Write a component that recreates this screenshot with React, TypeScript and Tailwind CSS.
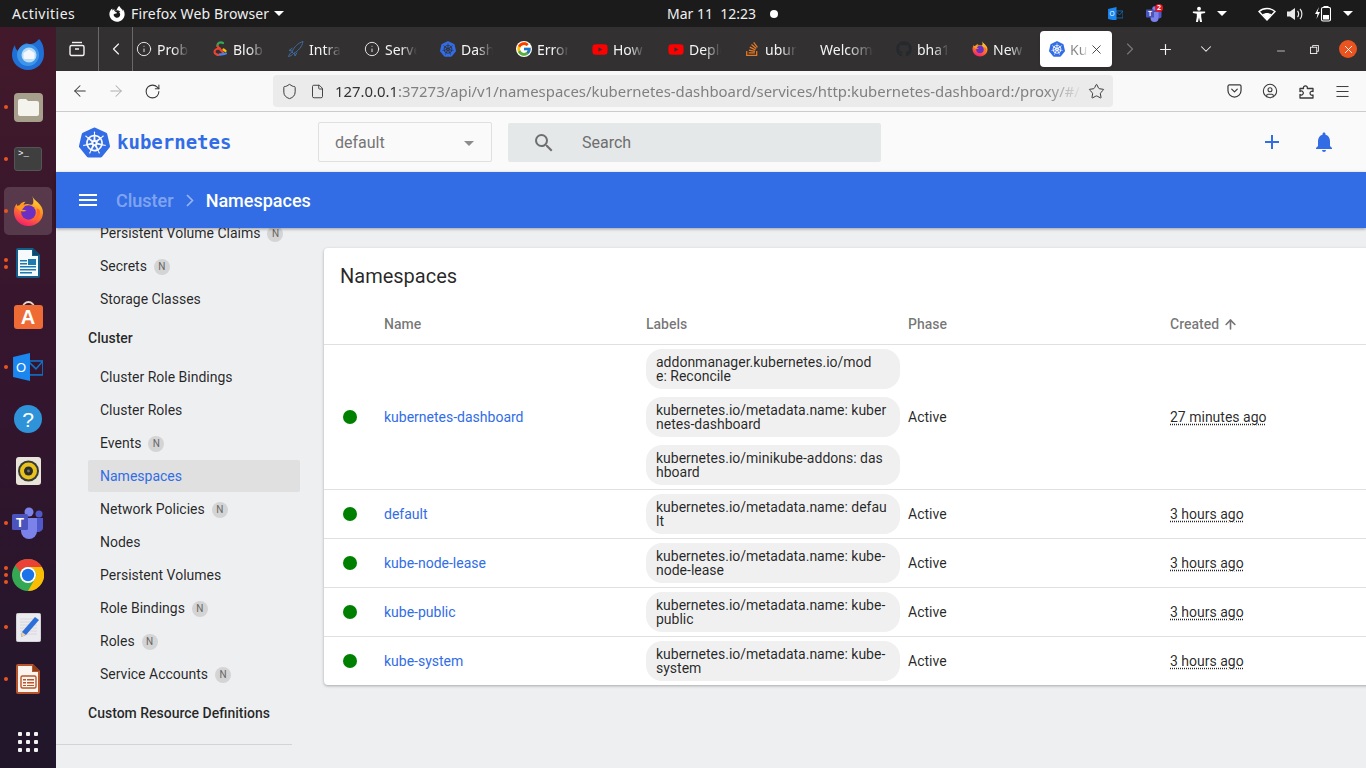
import { ArrowLeft, ArrowRight, ArrowUp, RotateCw, Shield, File, Star, CircleUser, Menu, ChevronLeft, ChevronRight, ChevronDown, Plus, X, Info, Minus } from "lucide-react";
import { FaFirefoxBrowser, FaGithub, FaStackOverflow, FaYoutube } from "react-icons/fa";
import { FcGoogle } from "react-icons/fc";
import { SiKubernetes } from "react-icons/si";
import { MdAdd, MdArrowDropDown, MdMenu, MdNotifications, MdSearch } from "react-icons/md";
import type { ReactNode } from "react";

function FirefoxIcon({ size }: { size: number }) {
    return (
        <svg width={size} height={size} viewBox="0 0 32 32">
            <defs>
                <linearGradient id="ffa" x1="0.7" y1="0" x2="0.3" y2="1">
                    <stop offset="0" stopColor="#ffe03a" />
                    <stop offset="0.45" stopColor="#ff8a1f" />
                    <stop offset="1" stopColor="#f5196e" />
                </linearGradient>
            </defs>
            <path d="M20 0c1 3 3 4 6 7 3 3 5 6 5 10 0 8-7 14-15 14S1 25 1 16c0-3 1-6 3-8 0 2 1 3 2 3 1-3 4-5 7-5-1 1-2 2-2 3 2-1 5-1 7 0 3 1 4-3 2-9z" fill="url(#ffa)" />
            <circle cx="16" cy="17" r="7.5" fill="#6b2fc4" />
            <path d="M3 11c3-2 6-2 9 0l-3 3 5 1c-3 2-7 1-11-4z" fill="#ff9a1f" />
            <path d="M24 13c2 5 0 11-6 12 5 1 10-3 10-8 0-2-1-4-4-4z" fill="#ff6a2a" />
        </svg>
    );
}

function ChromeIcon() {
    return (
        <svg width="32" height="32" viewBox="0 0 32 32">
            <circle cx="16" cy="16" r="16" fill="#34a853" />
            <path d="M16 0a16 16 0 0 1 13.900 8H16a8 8 0 0 0-7.500 5.200L3.200 6.200A16 16 0 0 1 16 0z" fill="#ea4335" />
            <path d="M29.900 8A16 16 0 0 1 16 32l6.600-11.500A8 8 0 0 0 22 10.500z M29.900 8H16l6 2.500z" fill="#fbbc04" />
            <circle cx="16" cy="16" r="8" fill="#fff" />
            <circle cx="16" cy="16" r="6.200" fill="#1a73e8" />
        </svg>
    );
}

function ThunderbirdIcon() {
    return (
        <svg width="32" height="32" viewBox="0 0 32 32">
            <path d="M27 0c4 4 5 9 5 15 0 9-7 16-16 16S0 24 0 16C0 12 1 9 3 6c0 3 1 4 3 6 2-5 6-8 11-8-1 0-2 1-2 2 5-1 9-2 12-6z" fill="#1f6fd6" />
            <circle cx="16" cy="16" r="11" fill="#3f96e8" />
            <circle cx="17" cy="16" r="7.500" fill="#b9dcf8" />
            <path d="M11.500 14l5.500-3.500 5.500 3.500v4.500a1.500 1.500 0 0 1-1.500 1.500h-8a1.500 1.500 0 0 1-1.500-1.500z" fill="#f4f8fd" />
        </svg>
    );
}

function FilesIcon() {
    return (
        <svg width="29" height="29" viewBox="0 0 29 29">
            <rect width="29" height="29" rx="4" fill="#a69f8c" />
            <path d="M4 8a2 2 0 0 1 2-2h6l2 2h9a2 2 0 0 1 2 2v11a2 2 0 0 1-2 2H6a2 2 0 0 1-2-2z" fill="#f5f3ee" />
        </svg>
    );
}

function TerminalIcon() {
    return (
        <div className="w-[28px] h-[24px] rounded-[3px] bg-[#3f3f3f] border border-[#555] px-[3px] leading-[12px] text-[9px] text-white font-['Liberation_Mono',monospace]">
            &gt;_
        </div>
    );
}

function WriterIcon() {
    return (
        <svg width="24" height="30" viewBox="0 0 24 30">
            <path d="M2 0h15l7 7v21a2 2 0 0 1-2 2H2a2 2 0 0 1-2-2V2a2 2 0 0 1 2-2z" fill="#135f8c" />
            <path d="M2 2h14v6h6v20H2z" fill="#f6fafc" />
            <path d="M17 0l7 7h-7z" fill="#0c4a70" />
            <path d="M4 12h7v1.500H4zM4 15h7v1.500H4zM4 18h16v1.500H4zM4 21h16v1.500H4zM4 24h12v1.500H4z" fill="#1b7ab0" />
            <rect x="12" y="11" width="8" height="6" fill="#1b7ab0" />
        </svg>
    );
}

function SoftwareIcon() {
    return (
        <div className="relative w-[29px] h-[28px]">
            <div className="absolute left-[8px] top-0 w-[13px] h-[9px] rounded-t-full border-2 border-b-0 border-[#e8d9c8]" />
            <div className="absolute left-0 bottom-0 w-[29px] h-[24px] rounded-[3px] bg-[#ef6b35] flex items-center justify-center text-white font-bold text-[20px] leading-none font-['Liberation_Sans',sans-serif]">
                A
            </div>
        </div>
    );
}

function OutlookIcon({ small }: { small?: boolean }) {
    const w = small ? 15 : 30;
    return (
        <svg width={w} height={w * 0.93} viewBox="0 0 30 28">
            <rect x="15" y="8" width="15" height="14" fill="none" stroke="#1172c9" strokeWidth="1.600" />
            <path d="M15 8l8 8 7-8" fill="none" stroke="#1172c9" strokeWidth="1.600" />
            <path d="M0 4l17-4v28L0 24z" fill="#1a86ee" />
            <text x="8" y="19" textAnchor="middle" fontSize="13" fill="#fff" fontFamily="Liberation Sans, sans-serif">O</text>
        </svg>
    );
}

function HelpIcon() {
    return (
        <div className="w-[28px] h-[28px] rounded-full bg-[#2f93d9] flex items-center justify-center text-white text-[21px] leading-none font-['Liberation_Sans',sans-serif]">
            ?
        </div>
    );
}

function RhythmboxIcon() {
    return (
        <svg width="25" height="28" viewBox="0 0 25 28">
            <rect width="25" height="28" rx="3" fill="#e8e4d9" />
            <circle cx="12.500" cy="14" r="10.500" fill="#3a3a34" />
            <circle cx="12.500" cy="14" r="8.500" fill="#e8c31e" />
            <circle cx="12.500" cy="14" r="4.500" fill="#2b2b28" />
            <circle cx="12.500" cy="14" r="1.400" fill="#77736a" />
        </svg>
    );
}

function TeamsIcon({ size = 32 }: { size?: number }) {
    return (
        <svg width={size} height={size} viewBox="0 0 32 32">
            <circle cx="17" cy="5" r="4.500" fill="#7b83eb" />
            <circle cx="27" cy="7" r="3.500" fill="#5059c9" />
            <path d="M23 11h8v10a5 5 0 0 1-8 3z" fill="#5059c9" />
            <path d="M9 11h16v13a8 8 0 0 1-16 0z" fill="#7b83eb" />
            <rect x="0" y="7" width="16" height="16" rx="1.500" fill="#4b53bc" />
            <text x="8" y="20" textAnchor="middle" fontSize="13" fontWeight="700" fill="#fff" fontFamily="Liberation Sans, sans-serif">T</text>
        </svg>
    );
}

function EditorIcon() {
    return (
        <svg width="25" height="29" viewBox="0 0 25 29">
            <rect width="25" height="29" rx="3" fill="#ebebef" stroke="#b9b9c0" />
            <path d="M4 6h17M4 9h17M4 12h17M4 15h17M4 18h17M4 21h17" stroke="#d7d7dc" />
            <path d="M19 4l4 3-13 15-5 2 1-5z" fill="#2d6fd8" />
            <path d="M6 19l4 3-5 2z" fill="#f0cfa0" />
        </svg>
    );
}

function ImpressIcon() {
    return (
        <svg width="24" height="30" viewBox="0 0 24 30">
            <path d="M2 0h15l7 7v21a2 2 0 0 1-2 2H2a2 2 0 0 1-2-2V2a2 2 0 0 1 2-2z" fill="#b8552a" />
            <path d="M2 2h14v6h6v20H2z" fill="#fbf5f0" />
            <path d="M17 0l7 7h-7z" fill="#8c3f1c" />
            <rect x="5" y="12" width="15" height="12" rx="1.500" fill="none" stroke="#b8552a" strokeWidth="1.400" />
            <path d="M7 15h3v1.500H7zM11 15h7v1.500h-7zM7 18h3v1.500H7zM11 18h7v1.500h-7zM7 21h3v1H7zM11 21h7v1h-7z" fill="#b8552a" />
        </svg>
    );
}

function AppGridIcon() {
    return (
        <div className="grid grid-cols-3 gap-[4px]">
            {Array.from({ length: 9 }).map((_, i) => (
                <div key={i} className="w-[4px] h-[4px] rounded-[1px] bg-[#f2f2f2]" />
            ))}
        </div>
    );
}

const dockItems: { icon: ReactNode; dots: number; active?: boolean }[] = [
    { icon: <ThunderbirdIcon />, dots: 0 },
    { icon: <FilesIcon />, dots: 1 },
    { icon: <TerminalIcon />, dots: 1 },
    { icon: <FirefoxIcon size={31} />, dots: 1, active: true },
    { icon: <WriterIcon />, dots: 2 },
    { icon: <SoftwareIcon />, dots: 0 },
    { icon: <OutlookIcon />, dots: 1 },
    { icon: <HelpIcon />, dots: 0 },
    { icon: <RhythmboxIcon />, dots: 0 },
    { icon: <TeamsIcon />, dots: 1 },
    { icon: <ChromeIcon />, dots: 3 },
    { icon: <EditorIcon />, dots: 1 },
    { icon: <ImpressIcon />, dots: 1 },
];

function Dock() {
    return (
        <div className="w-[56px] shrink-0 flex flex-col items-center pt-[2px] bg-gradient-to-b from-[#42192a] via-[#33152e] to-[#20162a]">
            {dockItems.map((item, i) => (
                <div key={i} className="relative w-[56px] h-[52px] flex items-center justify-center">
                    {item.active && <div className="absolute left-[4px] top-[2px] w-[48px] h-[48px] rounded-[5px] bg-white/15" />}
                    <div className="absolute left-[4px] top-0 bottom-0 flex flex-col justify-center gap-[3px]">
                        {Array.from({ length: item.dots }).map((_, d) => (
                            <div key={d} className="w-[4px] h-[4px] rounded-full bg-[#e95420]" />
                        ))}
                    </div>
                    <div className="relative">{item.icon}</div>
                </div>
            ))}
            <div className="mt-[27px]">
                <AppGridIcon />
            </div>
        </div>
    );
}

function TopBar() {
    return (
        <div className="h-[27px] bg-[#1b1b1b] text-[#f0f0f0] flex items-center text-[14px] font-['Noto_Sans',sans-serif]">
            <span className="ml-[12px] w-[63px] tracking-[0.5px]">Activities</span>
            <FaFirefoxBrowser className="ml-[34px] text-white" size={16} />
            <span className="ml-[6px] w-[138px] whitespace-nowrap tracking-[0.15px]">Firefox Web Browser</span>
            <Caret className="ml-[5px]" />
            <span className="ml-[383px] w-[90px] whitespace-pre">Mar 11  12:23</span>
            <div className="ml-[13px] w-[8px] h-[8px] rounded-full bg-white" />
            <div className="ml-[330px]"><OutlookIcon small /></div>
            <div className="ml-[23px]"><TeamsWithBadge /></div>
            <svg className="ml-[30px]" width="14" height="16" viewBox="0 0 16 18" fill="#fff">
                <circle cx="8" cy="3" r="2.200" />
                <path d="M1 6h14v1.800l-4.500.8V12l1 6H9.200L8 13l-1.200 5H4.500l1-6V8.600L1 7.800z" />
            </svg>
            <Caret className="ml-[11px]" />
            <svg className="ml-[31px]" width="18" height="14" viewBox="0 0 18 14" fill="none" stroke="#fff" strokeWidth="1.400">
                <path d="M1 4.500C5.500.5 12.500.5 17 4.500L9 13z" />
                <path d="M4.500 7.500c2.500-2 6.500-2 9 0L9 13z" fill="#fff" stroke="none" />
            </svg>
            <svg className="ml-[11px]" width="16" height="14" viewBox="0 0 16 14" fill="#e8e8e8">
                <path d="M0 4.500h3L8 1v12L3 9.500H0z" />
                <path d="M10.500 4c1.500 1.500 1.500 4.500 0 6M13 2c2.500 2.500 2.500 7.500 0 10" fill="none" stroke="#e8e8e8" strokeWidth="1.200" />
            </svg>
            <svg className="ml-[12px]" width="16" height="16" viewBox="0 0 16 16">
                <path d="M4 1L0 8h2.500L1.500 13 5 6H2.500z" fill="#fff" />
                <rect x="6.500" y="1.500" width="9" height="13.500" rx="1.500" fill="none" stroke="#fff" strokeWidth="1.100" />
                <rect x="8.500" y="0" width="5" height="1.500" fill="#fff" />
                <rect x="8" y="9" width="6" height="4.500" fill="#fff" />
            </svg>
            <Caret className="ml-[12px]" />
        </div>
    );
}

function TeamsWithBadge() {
    return (
        <div className="relative">
            <TeamsIcon size={16} />
            <span className="absolute -top-[2px] -right-[1px] w-[8px] h-[8px] rounded-full bg-[#e81123] text-white text-[7px] leading-[8px] text-center font-bold">2</span>
        </div>
    );
}

function Caret({ className }: { className: string }) {
    return <div className={`${className} w-0 h-0 border-x-[5px] border-x-transparent border-t-[5px] border-t-white`} />;
}

function BlobIcon() {
    return (
        <svg width="16" height="16" viewBox="0 0 16 16" fill="none" strokeWidth="2.200" strokeLinecap="round">
            <path d="M11 2C8.500.5 5 2 5.500 5" stroke="#34a853" />
            <path d="M5.500 5c.5 2 4 4 5.500 6.500" stroke="#ea4335" />
            <path d="M8 7.500c-3 0-5.500 1.500-5.500 3.500s3.500 3.500 5.500 2.500" stroke="#ea4335" />
            <path d="M8 13.500c2 0 3.500-.5 6-1" stroke="#4285f4" />
            <path d="M11.500 8.500l2 1.500" stroke="#fbbc04" />
        </svg>
    );
}

function IntraIcon() {
    return (
        <svg width="16" height="16" viewBox="0 0 16 16" fill="none" stroke="#3f6c9f" strokeWidth="1">
            <path d="M15 .5C10 2 6 6 4 11l1.500 1.500C10 10 14 6 15 .5z" />
            <path d="M4 11C2 12 1 14 .5 15.500c2-.5 4-1.500 5-3M4.500 7L1 9.500l3 .5M9 11.500L7 15l-.5-3" />
        </svg>
    );
}

function K8sTabIcon() {
    return <SiKubernetes size={16} className="text-[#326de6]" />;
}

const tabs: { title: string; icon?: ReactNode }[] = [
    { title: "Problem", icon: <Info size={16} strokeWidth={1.4} className="text-[#f0f0f0]" /> },
    { title: "Blob", icon: <BlobIcon /> },
    { title: "Intranet", icon: <IntraIcon /> },
    { title: "Server", icon: <Info size={16} strokeWidth={1.4} className="text-[#f0f0f0]" /> },
    { title: "Dashboard", icon: <K8sTabIcon /> },
    { title: "Errors", icon: <FcGoogle size={16} className="rounded-full bg-white" /> },
    { title: "How to", icon: <FaYoutube size={17} className="text-[#ff0000]" /> },
    { title: "Deploy", icon: <FaYoutube size={17} className="text-[#ff0000]" /> },
    { title: "ubuntu", icon: <FaStackOverflow size={16} className="text-[#e87922]" /> },
    { title: "Welcome" },
    { title: "bha1", icon: <FaGithub size={16} className="text-[#24292e]" /> },
    { title: "New Tab", icon: <FirefoxIcon size={16} /> },
];

function TabBar() {
    return (
        <div className="h-[44px] bg-[#323031] flex items-center text-[14px] text-[#f4f4f4] font-['Noto_Sans',sans-serif]">
            <div className="w-[42px] h-full flex items-center justify-center border-r border-[#6a6869] box-content">
                <svg width="16" height="16" viewBox="0 0 16 16" fill="none" stroke="#f4f4f4" strokeWidth="1.400">
                    <path d="M3 1.500h10" />
                    <rect x="1" y="4.500" width="14" height="10" rx="1.500" />
                    <path d="M6 8h4" strokeWidth="1.500" />
                </svg>
            </div>
            <div className="w-[34px] h-full flex items-center justify-center border-r border-[#6a6869]">
                <ChevronLeft size={20} strokeWidth={1.4} className="text-[#f4f4f4]" />
            </div>
            <div className="w-[907px] flex overflow-hidden">
                {tabs.map((tab) => (
                    <div key={tab.title} className="w-[76px] shrink-0 flex items-center gap-[5px] pl-[3px]">
                        {tab.icon && <span className="w-[16px] shrink-0 flex justify-center">{tab.icon}</span>}
                        <span className={`${tab.icon ? "w-[32px]" : "w-[54px]"} whitespace-nowrap overflow-hidden [mask-image:linear-gradient(to_right,black_50%,transparent)]`}>
                            {tab.title}
                        </span>
                    </div>
                ))}
            </div>
            <div className="w-[72px] h-[36px] rounded-[4px] bg-white flex items-center pl-[9px] shadow-sm">
                <K8sTabIcon />
                <span className="ml-[5px] w-[18px] overflow-hidden whitespace-nowrap text-[#8a8a8a] [mask-image:linear-gradient(to_right,black_60%,transparent)]">Kubernetes</span>
                <X size={15} strokeWidth={1.4} className="ml-[1px] text-[#333]" />
            </div>
            <div className="w-[35px] flex justify-center">
                <ChevronRight size={20} strokeWidth={1.4} className="text-[#777]" />
            </div>
            <div className="w-[36px] flex justify-center">
                <Plus size={17} strokeWidth={1.6} className="text-[#f4f4f4]" />
            </div>
            <div className="w-[36px] ml-[5px] flex justify-center">
                <ChevronDown size={18} strokeWidth={1.4} className="text-[#f4f4f4]" />
            </div>
            <div className="w-[34px] ml-[40px] flex justify-center">
                <Minus size={12} strokeWidth={1.4} className="text-[#f4f4f4] mt-[3px]" />
            </div>
            <div className="w-[34px] -ml-[1px] flex justify-center">
                <svg width="9" height="9" viewBox="0 0 10 10" fill="none" stroke="#f4f4f4" strokeWidth="1">
                    <rect x="0.500" y="2.500" width="7" height="7" />
                    <path d="M3 2.500V.5h6.500V7H7.500" />
                </svg>
            </div>
            <div className="w-[34px] flex justify-center">
                <div className="w-[18px] h-[18px] rounded-full bg-[#e95420] flex items-center justify-center">
                    <X size={13} strokeWidth={1.6} className="text-white" />
                </div>
            </div>
        </div>
    );
}

function NavBar() {
    return (
        <div className="h-[41px] bg-[#f9f9fa] border-b border-[#cccccc] flex items-center text-[#3a3a3a] font-['Noto_Sans',sans-serif]">
            <div className="w-[36px] ml-[6px] flex justify-center"><ArrowLeft size={18} strokeWidth={1.4} /></div>
            <div className="w-[36px] flex justify-center"><ArrowRight size={18} strokeWidth={1.4} className="text-[#b0b0b0]" /></div>
            <div className="w-[36px] flex justify-center"><RotateCw size={17} strokeWidth={1.5} /></div>
            <div className="ml-[103px] w-[840px] h-[32px] rounded-[4px] bg-[#ebebeb] flex items-center">
                <Shield size={17} strokeWidth={1.4} className="ml-[8px] shrink-0" />
                <File size={15} strokeWidth={1.5} className="ml-[12px] shrink-0" />
                <span className="ml-[10px] w-[748px] shrink-0 text-[14.9px] whitespace-nowrap overflow-hidden text-[#808080] [mask-image:linear-gradient(to_right,black_95%,transparent)]">
                    <span className="text-[#333333]">127.0.0.1</span>:37273/api/v1/namespaces/kubernetes-dashboard/services/http:kubernetes-dashboard:/proxy/#/
                </span>
                <Star size={17} strokeWidth={1.4} className="ml-[5px] shrink-0" />
            </div>
            <div className="ml-[103px] w-[36px] flex justify-center">
                <svg width="15" height="14" viewBox="0 0 16 15" fill="none" stroke="#3a3a3a" strokeWidth="1.300">
                    <path d="M2.500 1h11A1.500 1.500 0 0 1 15 2.500V7a7 7 0 0 1-14 0V2.500A1.500 1.500 0 0 1 2.500 1z" />
                    <path d="M5 5.500l3 3 3-3" strokeLinecap="round" strokeLinejoin="round" />
                </svg>
            </div>
            <div className="w-[36px] flex justify-center"><CircleUser size={16} strokeWidth={1.6} /></div>
            <div className="w-[36px] flex justify-center">
                <svg width="15" height="16" viewBox="0 0 15 16" fill="none" stroke="#3a3a3a" strokeWidth="1.300" strokeLinejoin="round">
                    <path d="M1 5.500h3.500a2 2 0 1 1 3.800 0H14v3a2 2 0 1 0 0 3.500V15H1v-3.500a2 2 0 1 0 0-3z" />
                </svg>
            </div>
            <div className="w-[36px] flex justify-center"><Menu size={17} strokeWidth={1.4} /></div>
        </div>
    );
}

function AppHeader() {
    return (
        <div className="h-[60px] bg-[#fafafa] flex items-center">
            <SiKubernetes size={31} className="ml-[23px] text-[#326de6]" />
            <span className="ml-[7px] w-[114px] text-[19px] font-bold text-[#326de6] font-['DejaVu_Sans_Mono',monospace]">kubernetes</span>
            <div className="ml-[87px] w-[174px] h-[40px] pt-px border border-[#e0e0e0] rounded-[2px] flex items-center justify-between pl-[16px] pr-[10px] text-[16px] text-[#757575]">
                default
                <MdArrowDropDown size={24} className="text-[#8c8c8c]" />
            </div>
            <div className="ml-[16px] w-[373px] h-[39px] pt-px bg-[#e4e8e9] rounded-[2px] flex items-center text-[16px] text-[#6e6e6e]">
                <MdSearch size={24} className="ml-[24px]" />
                <span className="ml-[26px]">Search</span>
            </div>
            <MdAdd size={24} className="ml-[379px] text-[#326de6]" />
            <MdNotifications size={24} className="ml-[28px] text-[#326de6]" />
        </div>
    );
}

function BlueBar() {
    return (
        <div className="relative z-10 h-[56px] bg-[#326de6] flex items-center text-[18px] font-medium shadow-[0_1px_3px_rgba(0,0,0,0.35)]">
            <MdMenu size={24} className="ml-[20px] text-white" />
            <span className="ml-[16px] text-white/40">Cluster</span>
            <svg className="ml-[12px]" width="8" height="13" viewBox="0 0 8 13" fill="none" stroke="#ffffff" strokeOpacity="0.5" strokeWidth="1.600">
                <path d="M1 1l5.500 5.500L1 12" />
            </svg>
            <span className="ml-[12px] text-white">Namespaces</span>
        </div>
    );
}

function NavRow({ label, badge, active }: { label: string; badge?: boolean; active?: boolean }) {
    return (
        <div className={`flex items-center pl-[12px] ml-[32px] ${active ? "h-[32px] mb-[1px] bg-[#e0e0e0] rounded-[2px] text-[#326de6]" : "h-[33px]"}`}>
            <span>{label}</span>
            {badge && (
                <span className="ml-[7px] w-[16px] h-[16px] rounded-full bg-[#d4d4d4] text-[10px] leading-[16px] text-center text-[#666]">N</span>
            )}
        </div>
    );
}

function NavHeading({ label, className }: { label: string; className: string }) {
    return <div className={`${className} flex items-center pl-[32px] font-medium`}>{label}</div>;
}

function Sidebar() {
    return (
        <div className="w-[244px] shrink-0 -mt-[11px] text-[14px] text-black/85">
            <NavRow label="Persistent Volume Claims" badge />
            <NavRow label="Secrets" badge />
            <NavRow label="Storage Classes" />
            <NavHeading label="Cluster" className="h-[45px]" />
            <NavRow label="Cluster Role Bindings" />
            <NavRow label="Cluster Roles" />
            <NavRow label="Events" badge />
            <NavRow label="Namespaces" active />
            <NavRow label="Network Policies" badge />
            <NavRow label="Nodes" />
            <NavRow label="Persistent Volumes" />
            <NavRow label="Role Bindings" badge />
            <NavRow label="Roles" badge />
            <NavRow label="Service Accounts" badge />
            <NavHeading label="Custom Resource Definitions" className="h-[44px]" />
            <div className="mt-[9px] w-[236px] h-px bg-[#d4d4d6]" />
        </div>
    );
}

const rows = [
    {
        name: "kubernetes-dashboard",
        labels: [
            "addonmanager.kubernetes.io/mod\ne: Reconcile",
            "kubernetes.io/metadata.name: kuber\nnetes-dashboard",
            "kubernetes.io/minikube-addons: das\nhboard",
        ],
        created: "27 minutes ago",
    },
    { name: "default", labels: ["kubernetes.io/metadata.name: defau\nlt"], created: "3 hours ago" },
    { name: "kube-node-lease", labels: ["kubernetes.io/metadata.name: kube-\nnode-lease"], created: "3 hours ago" },
    { name: "kube-public", labels: ["kubernetes.io/metadata.name: kube-\npublic"], created: "3 hours ago" },
    { name: "kube-system", labels: ["kubernetes.io/metadata.name: kube-\nsystem"], created: "3 hours ago" },
];

function NamespacesCard() {
    return (
        <div className="ml-[24px] mt-[20px] -mr-[8px] flex-1 self-start bg-white rounded-[4px] shadow-[0_1px_3px_rgba(0,0,0,0.3)] text-[14px] text-black/85">
            <div className="h-[55px] pl-[16px] flex items-center text-[20px]">Namespaces</div>
            <div className="h-[42px] grid grid-cols-[60px_262px_262px_262px_1fr] items-center pt-[2px] border-b border-[#e0e0e0] text-black/55 font-medium">
                <div />
                <div>Name</div>
                <div>Labels</div>
                <div>Phase</div>
                <div className="flex items-center gap-[4px]">
                    Created
                    <ArrowUp size={15} strokeWidth={2.6} className="text-[#757575]" />
                </div>
            </div>
            {rows.map((row, i) => (
                <div
                    key={row.name}
                    className={`grid grid-cols-[60px_262px_262px_262px_1fr] items-center ${i < rows.length - 1 ? "border-b border-[#e0e0e0]" : ""}`}
                >
                    <div className="pl-[19px]">
                        <div className="w-[14px] h-[14px] rounded-full bg-[#008000]" />
                    </div>
                    <div className="text-[#326de6]">{row.name}</div>
                    <div className="flex flex-col gap-[8px] py-[4px]">
                        {row.labels.map((label) => (
                            <div key={label} className="w-[254px] px-[10px] py-[6px] rounded-[16px] bg-[#f0f0f0] leading-[14px] whitespace-pre-line">
                                {label}
                            </div>
                        ))}
                    </div>
                    <div>Active</div>
                    <div>
                        <span className="underline decoration-dotted underline-offset-2">{row.created}</span>
                    </div>
                </div>
            ))}
        </div>
    );
}

export default function App() {
    return (
        <div className="w-[1366px] h-[768px] overflow-hidden flex flex-col font-['Roboto',sans-serif]">
            <TopBar />
            <div className="flex-1 flex min-h-0">
                <Dock />
                <div className="flex-1 min-w-0 flex flex-col bg-[#eeeff1]">
                    <TabBar />
                    <NavBar />
                    <AppHeader />
                    <BlueBar />
                    <div className="flex-1 flex min-h-0 overflow-hidden">
                        <Sidebar />
                        <NamespacesCard />
                    </div>
                </div>
            </div>
        </div>
    );
}
